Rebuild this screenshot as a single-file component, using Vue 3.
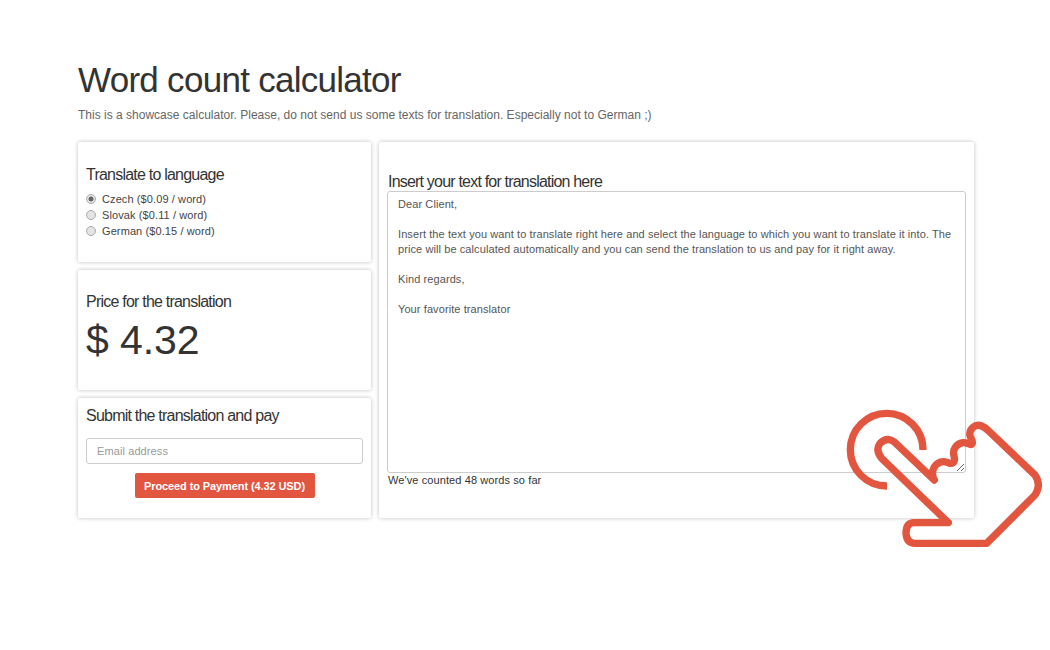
<script setup>
import { ref } from 'vue'
const languages = [
  { id: 'cs', label: 'Czech ($0.09 / word)' },
  { id: 'sk', label: 'Slovak ($0.11 / word)' },
  { id: 'de', label: 'German ($0.15 / word)' }
]
const picked = ref('cs')
const text = ref(`Dear Client,

Insert the text you want to translate right here and select the language to which you want to translate it into. The price will be calculated automatically and you can send the translation to us and pay for it right away.

Kind regards,

Your favorite translator`)
</script>

<template>
  <div class="page">
    <h1 class="title">Word count calculator</h1>
    <p class="lead">This is a showcase calculator. Please, do not send us some texts for translation. Especially not to German ;)</p>
    <div class="grid">
      <div class="col">
        <section class="card lang">
          <h3 class="head">Translate to language</h3>
          <label v-for="l in languages" :key="l.id" class="opt">
            <input v-model="picked" class="radio" type="radio" name="lang" :value="l.id" />
            <span>{{ l.label }}</span>
          </label>
        </section>
        <section class="card price">
          <h3 class="head">Price for the translation</h3>
          <div class="amount">$ 4.32</div>
        </section>
        <section class="card submit">
          <h3 class="head">Submit the translation and pay</h3>
          <input class="email" type="text" placeholder="Email address" />
          <button class="pay" type="button">Proceed to Payment (4.32 USD)</button>
        </section>
      </div>
      <section class="card main">
        <h3 class="head main-head">Insert your text for translation here</h3>
        <textarea v-model="text" class="area" spellcheck="false"></textarea>
        <p class="count">We've counted 48 words so far</p>
      </section>
    </div>
    <svg class="hand" viewBox="0 0 660 510" fill="none" stroke="#e2553f" stroke-width="22" stroke-linecap="round" stroke-linejoin="round" aria-hidden="true">
      <path stroke-linecap="butt" d="M171 288 A109 109 0 1 1 279 180" />
      <path d="M313 270 L192 155 Q170 140 150 160 Q135 180 155 205 L355 398 L250 398 Q228 400 228 430 Q230 460 255 460 L470 460 L615 315 Q635 285 615 255 L475 122 Q465 112 455 108 C435 100 416 118 420 138 C424 148 432 158 425 163 C418 166 412 157 400 158 C380 160 366 178 372 198 C376 212 372 222 360 220 C352 218 345 212 332 216 C308 225 302 250 313 270" />
    </svg>
  </div>
</template>

<style>
html, body { margin: 0; background: #fff; }
</style>

<style scoped>
.page {
  position: relative;
  width: 1050px;
  height: 650px;
  box-sizing: border-box;
  padding: 60px 0 0 78px;
  overflow: hidden;
  font-family: "Liberation Sans", Arial, sans-serif;
  color: #333;
}
.title {
  margin: 0;
  font-size: 35px;
  line-height: 40px;
  font-weight: 400;
  letter-spacing: -0.72px;
}
.lead {
  margin: 7px 0 0;
  font-size: 12px;
  line-height: 17px;
  letter-spacing: 0.005px;
  color: #666;
}
.grid {
  display: grid;
  grid-template-columns: 293px 595px;
  gap: 8px;
  margin-top: 18px;
  height: 376px;
}
.col {
  display: grid;
  grid-template-rows: repeat(3, 120px);
  gap: 8px;
}
.card {
  box-sizing: border-box;
  background: #fff;
  border-radius: 2px;
  box-shadow: 0 0 4px rgba(0, 0, 0, 0.26);
  padding: 0 8px;
}
.head {
  margin: 0;
  font-size: 16px;
  line-height: 20px;
  font-weight: 400;
  letter-spacing: -0.78px;
  color: #333;
}
.lang { padding-top: 23px; }
.lang .head { margin-bottom: 6px; }
.opt {
  display: flex;
  align-items: center;
  height: 16px;
  font-size: 11px;
  letter-spacing: 0.1px;
  color: #444;
}
.radio {
  appearance: none;
  width: 10px;
  height: 10px;
  margin: 0 6px 0 0;
  border: 1px solid #aaa;
  border-radius: 50%;
  background: #e4e4e4;
  box-sizing: border-box;
}
.radio:checked {
  background: radial-gradient(circle, #666 0 2.2px, #e4e4e4 2.8px);
}
.price { padding-top: 22px; }
.amount {
  font-size: 41px;
  line-height: 48px;
  margin-top: 4px;
  letter-spacing: -0.1px;
  color: #333;
}
.submit { padding-top: 8px; display: flex; flex-direction: column; }
.email {
  box-sizing: border-box;
  width: 277px;
  height: 26px;
  margin-top: 12px;
  padding: 0 10px;
  border: 1px solid #ccc;
  border-radius: 3px;
  font: 11px "Liberation Sans", Arial, sans-serif;
  letter-spacing: 0.1px;
  outline: none;
}
.email::placeholder { color: #999; opacity: 1; }
.pay {
  align-self: center;
  width: 180px;
  height: 25px;
  margin-top: 9px;
  padding: 0;
  border: 0;
  border-radius: 2px;
  background: #e2553f;
  color: #fff;
  font: bold 11px "Liberation Sans", Arial, sans-serif;
  letter-spacing: -0.1px;
}
.main { padding-top: 30px; }
.main-head { margin-bottom: -1px; padding-left: 1px; letter-spacing: -0.8px; }
.area {
  display: block;
  box-sizing: border-box;
  width: 579px;
  height: 282px;
  margin: 0;
  padding: 5px 10px 0;
  border: 1px solid #ccc;
  border-radius: 3px;
  font: 11px/15px "Liberation Sans", Arial, sans-serif;
  letter-spacing: 0.09px;
  color: #555;
  outline: none;
}
.count {
  margin: 0;
  padding-left: 1px;
  font-size: 11px;
  line-height: 14px;
  letter-spacing: 0.1px;
  color: #333;
}
.hand {
  position: absolute;
  left: 830px;
  top: 390px;
  width: 220px;
  height: 170px;
}
</style>
